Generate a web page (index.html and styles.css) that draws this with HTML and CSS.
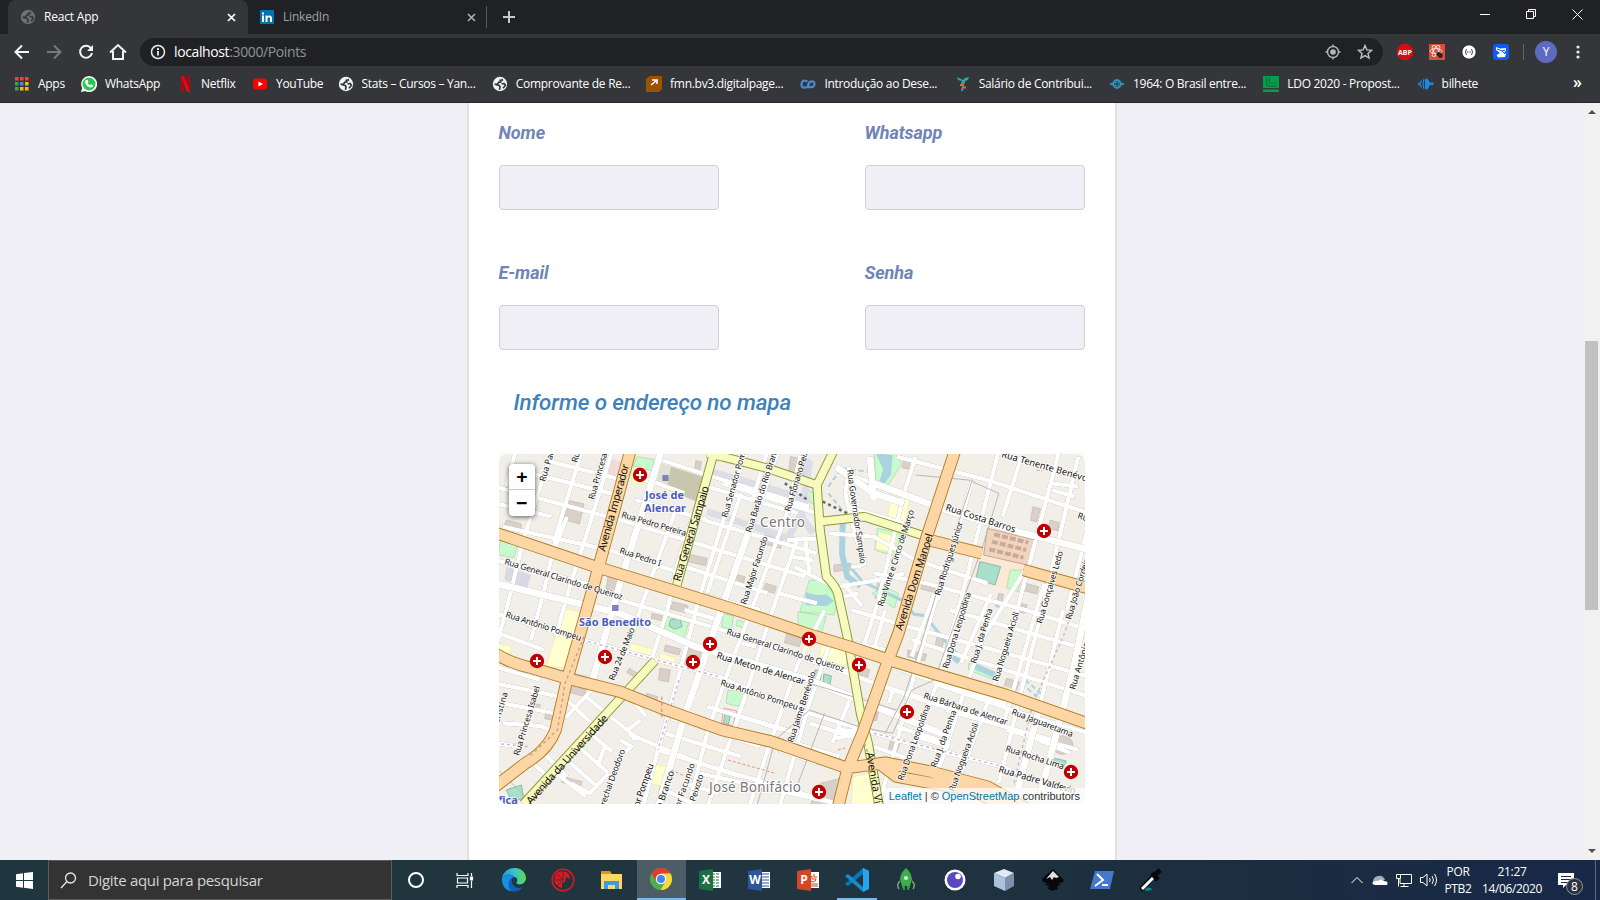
FILE: index.html
```html
<!DOCTYPE html>
<html lang="pt-BR">
<head>
<meta charset="utf-8">
<title>React App</title>
<link rel="stylesheet" href="styles.css">
</head>
<body>
<svg class="defs" width="0" height="0">
  <symbol id="globe" viewBox="0 0 16 16"><circle cx="8" cy="8" r="7.200" fill="currentColor"/><path d="M2.500 8.200L5 8.500l1.800-2.200 2-.4L8 3.500M4 9l3 .2 1 1.600-.5 3M10 2.800l.4 2.200M9.500 8l2.500-.6 1.500 1.800-2.500 3" fill="none" stroke="#35363a" stroke-width="1.700"/></symbol>
  <symbol id="cross" viewBox="-8 -8 16 16"><circle r="7.200" fill="#bf0000"/><path d="M0-4V4M-4 0H4" stroke="#fff" stroke-width="2"/></symbol>
</svg>
<div class="screen">
  <header class="browser">
    <div class="tabs">
      <div class="tab active"><svg class="fav dim" width="16" height="16"><use href="#globe"/></svg><span>React App</span><svg class="x" width="9" height="9" viewBox="0 0 9 9"><path d="M1 1l7 7M8 1L1 8"/></svg></div>
      <div class="tab"><svg class="fav" width="14" height="14" viewBox="0 0 14 14"><path fill="#0073b1" d="M0 0h14v14H0z"/><path fill="#fff" d="M2 5.500h2V12H2zM2 2.500h2v2H2zM5.500 5.500h1.900v1c1-1.700 4.600-1.500 4.600 1.500v4h-2V8.700c0-2-2.500-2-2.500 0V12h-2z"/></svg><span>LinkedIn</span><svg class="x grey" width="9" height="9" viewBox="0 0 9 9"><path d="M1 1l7 7M8 1L1 8"/></svg></div>
      <svg class="plus" width="12" height="12" viewBox="0 0 12 12"><path d="M6 0v12M0 6h12"/></svg>
      <div class="win">
        <svg width="10" height="10" viewBox="0 0 10 10"><path d="M0 5.500h10"/></svg>
        <svg width="10" height="10" viewBox="0 0 10 10"><path d="M.5 2.500h7v7h-7zM2.500 2.500v-2h7v7h-2"/></svg>
        <svg width="11" height="11" viewBox="0 0 11 11"><path d="M.5.5l10 10M10.500.5l-10 10"/></svg>
      </div>
    </div>
    <div class="toolbar">
      <div class="nav">
        <svg width="16" height="16" viewBox="0 0 16 16"><path d="M15 8H2M8 1.500L1.500 8 8 14.500"/></svg>
        <svg class="off" width="16" height="16" viewBox="0 0 16 16"><path d="M1 8h13M8 1.500L14.500 8 8 14.500"/></svg>
        <svg width="16" height="16" viewBox="0 0 16 16"><path d="M13.200 4.500A6 6 0 1 0 14 9"/><path d="M15 1v6H9z" fill="#f1f3f4" stroke="none"/></svg>
        <svg width="18" height="18" viewBox="0 0 18 18"><path d="M1 9.500l8-7.500 8 7.500M4 8v8h10V8"/></svg>
      </div>
      <div class="omni">
        <svg width="16" height="16" viewBox="0 0 16 16" fill="none" stroke="#e8eaed" stroke-width="1.500"><circle cx="8" cy="8" r="6.500"/><path d="M8 7v4.500M8 4v2" stroke-width="1.800"/></svg>
        <span class="url"><b>localhost</b>:3000/Points</span>
        <svg class="target" width="16" height="16" viewBox="0 0 16 16" fill="none" stroke="#b4b8bd" stroke-width="1.400"><circle cx="8" cy="8" r="5.500"/><circle cx="8" cy="8" r="2.800" fill="#b4b8bd" stroke="none"/><path d="M8 .5v2M8 13.500v2M.5 8h2M13.500 8h2"/></svg>
        <svg width="16" height="16" viewBox="0 0 16 16" fill="none" stroke="#bdc1c6" stroke-width="1.400"><path d="M8 1.500l1.900 4.400 4.700.4-3.600 3.100 1.100 4.700L8 11.600l-4.100 2.500L5 9.400 1.400 6.300l4.700-.4z"/></svg>
      </div>
      <div class="exts">
        <svg width="16" height="16" viewBox="0 0 16 16"><path fill="#d40d12" d="M4.700 0h6.600L16 4.700v6.600L11.300 16H4.700L0 11.300V4.700z"/><text x="8" y="10.600" class="abp">ABP</text></svg>
        <svg width="16" height="16" viewBox="0 0 16 16"><path fill="#dd4b39" d="M0 0h16v16H0z"/><g fill="none" stroke="#f3dcd8"><ellipse cx="7" cy="7" rx="6" ry="2.400"/><ellipse cx="7" cy="7" rx="6" ry="2.400" transform="rotate(60 7 7)"/><ellipse cx="7" cy="7" rx="6" ry="2.400" transform="rotate(120 7 7)"/></g><ellipse cx="10.500" cy="11" rx="3.500" ry="2.500" transform="rotate(35 10.500 11)" fill="#33201e"/></svg>
        <svg width="16" height="16" viewBox="0 0 16 16"><circle cx="8" cy="8" r="7.200" fill="#fff" stroke="#222"/><path d="M5.500 5q-2 3 0 6M10.500 5q2 3 0 6" stroke="#444" fill="none"/><path d="M6 8h4" stroke="#444" stroke-dasharray="1 .6"/></svg>
        <svg width="16" height="16" viewBox="0 0 16 16"><rect width="16" height="16" rx="3" fill="#0a5cf5"/><path fill="#fff" d="M3 3l4 1.500L13 4v3l-2 1 2 2-1 3-7 .5L3.500 11 7 9 3 6z"/><path d="M4 5l5 2 3 3M9 7l3-1" stroke="#0a5cf5" fill="none"/></svg>
        <i class="sep"></i><span class="avatar">Y</span>
        <svg width="4" height="16" viewBox="0 0 4 16" fill="#e8eaed"><circle cx="2" cy="3" r="1.600"/><circle cx="2" cy="8" r="1.600"/><circle cx="2" cy="13" r="1.600"/></svg>
      </div>
    </div>
    <div class="bookmarks">
      <a class="w67"><svg width="16" height="16" viewBox="0 0 16 16"><path fill="#f04438" d="M1 1h3.500v3.500H1zM6 1h3.500v3.500H6zM11 1h3.500v3.500H11z"/><path fill="#34a853" d="M1 6h3.500v3.500H1zM1 11h3.500v3.500H1z"/><path fill="#4285f4" d="M6 6h3.500v3.500H6z"/><path fill="#fbbc05" d="M11 6h3.500v3.500H11zM6 11h3.500v3.500H6zM11 11h3.500v3.500H11z"/></svg><span>Apps</span></a>
      <a class="w96"><svg width="16" height="16" viewBox="0 0 16 16"><path fill="#fff" d="M0 16l1.200-4A8 8 0 1 1 4.200 15z"/><circle cx="8" cy="8" r="6.500" fill="#25c94b"/><path fill="#fff" d="M5 4l1.500-.2L7.500 6l-.8 1c.6 1.100 1.300 1.700 2.400 2.200l1-1 2.100 1c0 2-2 2.500-3.500 2C6 10.500 4 8.500 4 6q0-1.300 1-2z"/></svg><span>WhatsApp</span></a>
      <a class="w75"><svg width="16" height="16" viewBox="0 0 16 16"><path fill="#b1060f" d="M4 0h3v16H4zM10 0h3v16h-3z"/><path fill="#e50914" d="M4 0h3l6 16h-3z"/></svg><span>Netflix</span></a>
      <a class="w85"><svg width="16" height="16" viewBox="0 0 16 16"><rect x="1" y="2.500" width="14" height="11" rx="2.500" fill="#f00"/><path fill="#fff" d="M6.500 5.500v5L11 8z"/></svg><span>YouTube</span></a>
      <a><svg width="16" height="16"><use href="#globe"/></svg><span>Stats – Cursos – Yan...</span></a>
      <a><svg width="16" height="16"><use href="#globe"/></svg><span>Comprovante de Re...</span></a>
      <a><svg width="16" height="16" viewBox="0 0 16 16"><path fill="#9b5300" d="M4 0h12v13l-3 3H0V3z"/><path d="M5 9l5-4M6 4h5v4" stroke="#fff" stroke-width="1.500" fill="none"/></svg><span>fmn.bv3.digitalpage...</span></a>
      <a><svg width="16" height="16" viewBox="0 0 16 16"><path d="M7.500 5.500Q2 3 1.500 8t6 3L9.500 6q5-2 5 2t-6 3" fill="none" stroke="#4b88cf" stroke-width="2.300"/></svg><span>Introdução ao Dese...</span></a>
      <a><svg width="16" height="16" viewBox="0 0 16 16"><path fill="#2fa7a5" d="M2 1l4 2 2 1 2-2 4-1-1 3-3 1 0 2-1 1-1 7H6l1-5-1-3 1-2-4-1z"/><path d="M5 9h4M8 11.500h3" stroke="#f56322" stroke-width="2"/></svg><span>Salário de Contribui...</span></a>
      <a><svg width="16" height="16" viewBox="0 0 16 16"><path d="M4 7q4-6 8 0M4 9q4 6 8 0M1 8h4M11 8h4" fill="none" stroke="#2a93c4" stroke-width="2"/><circle cx="8" cy="8" r="2" fill="none" stroke="#2a93c4"/></svg><span>1964: O Brasil entre...</span></a>
      <a><svg width="16" height="16" viewBox="0 0 16 16"><path fill="#00a04a" d="M0 0h16v12H0zM0 13.500h16V16H0z"/><path d="M3.500 1v9H14M6 1v6h8" stroke="#0b6d38" fill="none"/></svg><span>LDO 2020 - Propost...</span></a>
      <a><svg width="16" height="16" viewBox="0 0 16 16"><path fill="#1e88e5" d="M9 2l2 3 1 1.500h3.500v2.500H12L11 11l-2 3-2-2V4z"/><path d="M6 3L5 8l1 5M3.500 4.500L2 8l1.500 3.500M.8 6.500v3" fill="none" stroke="#1e88e5" stroke-width="1.200"/></svg><span>bilhete</span></a>
      <span class="more">»</span>
    </div>
  </header>

  <main class="page">
    <section class="card">
      <div class="grid">
        <label>Nome<input type="text"></label>
        <label>Whatsapp<input type="text"></label>
        <label>E-mail<input type="text"></label>
        <label>Senha<input type="text"></label>
      </div>
      <h2>Informe o endereço no mapa</h2>
      <div class="map">
        <svg width="586" height="350" viewBox="499 454 586 350">
          <g transform="translate(495 450) scale(.3788 .3333)" class="land">
            <path class="bld" d="M190 150l45 12-12 60-45-14zM300 370l25 5-10 50-22-8zM415 490l32 10-3 14-32-10zM510 595l35 10-14 60-35-10zM500 310l60 15-4 22-60-15zM470 455l40 12-5 22-42-12zM620 370l40 10-5 25-38-12zM715 400l28 10-6 20-30-9zM770 550l40 12-6 28-40-12zM820 490l32 10-8 35-30-8zM895 345l45-5v20l-45 5zM1010 400l20 5-10 45-17-5zM1050 180l15-15-5 40-14-2zM1080 30l20 8-5 20-20-5zM1130 395l35 12-6 20-35-10zM1400 400l35 10-4 22-35-10zM1385 460l20 5-7 25-18-5zM1330 430l13 3-10 40-12-4zM1350 685l35 10-8 26-33-9zM1090 600l50 13-6 20-45-12zM945 645l44 14-5 22-44-14zM435 655l28 5-5 36-26-6zM355 655l40 28-7 12-40-28zM200 705l40 14-5 20-40-12zM100 760l20 5-5 18-20-5zM135 780l28 7-5 25-27-6zM400 730l30 10-7 25-28-8zM180 980l50 15-4 17-50-15zM435 1005l10-35 20 6-14 60-18-5zM860 1000l70-20-12 94h-90zM1045 870l25 8-10 30-22-7zM1000 770l15 3-8 40-15-3zM30 210l40 12-4 26-45-12zM530 32l15 4-5 30-12-6zM780 20l50 10-10 50-45-12zM715 240l45 15-6 40-40-12zM1465 210l25 8-4 24-25-7zM1420 170l20 6-10 40-16-5zM1170 550l20 6-12 42-18-5zM60 640l28 9-6 27-26-7zM450 585l40 12-4 18-40-12z"/>
            <circle class="bld" cx="1498" cy="885" r="28"/>
            <path fill="#c8c6af" d="M460 48l105 38-26 72-90-42z"/>
            <path fill="#f1dada" d="M300 25l52 15-14 48-54-14z"/>
            <path fill="#fbe8d5" d="M1275 310l135 35-25 85-125-40z"/>
            <path fill="#e2e1d2" d="M435 40l30 8-12 70-28-10z"/>
            <path fill="#f0d4c0" stroke="#c9a58a" d="M1300 235l125 35-20 75-115-30z"/>
            <path fill="none" stroke="#c9aa97" stroke-width="4" stroke-dasharray="6 2" d="M1318 253l90 25M1312 275l90 25M1305 298l90 25"/>
            <path fill="#c8facc" stroke="#a5cfa9" stroke-width=".6" d="M375 20l45 8-5 35-50-15zM830 390q80 0 75 60l-10 45-90-10zM800 485l75 15-15 55-60-25zM1000 0h50l25 40-40 70-30-20zM1010 235l62 15-15 70-55-20zM450 500l62 18-15 50-50-15zM615 720l45 5-15 45-35-10zM600 490l30 8-6 40-25-8zM640 510l25 8-4 17-25-8zM1030 410l35 20-10 45-60-45zM1250 640l80 30-10 20-70-30zM15 270l45 12-10 42-42-10zM1360 360h35l-14 65-30-12zM820 115l30 20-5 30-25-14z"/>
            <path fill="#ffffd0" stroke="#f2efb0" d="M360 60l40 10-3 35-35-7zM180 475l45 10-30 170-60-5zM360 580l65 20-5 20-65-18zM1045 135l50 15-12 80-48-20zM1013 245l48 15-10 48-46-12zM860 585l70 15-3 50-70-25zM410 940l45 10-12 60-35-10zM945 980l50-10 10 104h-65zM815 560l20 25-6 20-18-5zM1345 710l28 10-6 20-25-8zM0 580l45 10-8 20-37-8zM435 610l42 12-4 20-40-12z"/>
            <path fill="#aae0cb" stroke="#8dbba8" d="M1280 335l55 15-15 55-50-20zM30 1020l40-15 5 40-30 10zM845 660l18 2-4 30-18-3zM868 672l20 6-4 30-18-5zM463 510l25-6 6 26-20 8-15-10zM1478 925l30 8-6 16-30-8zM608 785l15 4-7 35-13-3z"/>
            <path fill="none" stroke="#ef9f9f" d="M604 775l34 8-10 44-30-8z"/>
            <path fill="#aad3df" d="M820 425q30 15 55 8l20 20-20 15-55-2zM1005 10l45 5-5 60-20 30-10-12 10-35z"/>
            <path class="water w5" d="M918 210l-2 100 14 70 35 28"/><path class="water w4" d="M930 340l40 55 60 32 50 27 25 38 30 5 60 85 30 35"/><path class="water w5" d="M1190 600l35 35M1260 645l60 30"/>
            <path class="water dash" d="M880 110l35-55 70 10M880 130l40 55M1390 700l50 50M1400 690l50 50"/>
            <path fill="#d9d9e6" d="M30 350l65 25-10 40-60-25zM210 668l45 12-9 20-40-5z"/>
            <path class="mall" d="M555 60L830 150M560 185L790 270M730 30l-20 80M830 30l-20 170 30 50M780 140l30 50-40 80"/>
          </g>
          <g transform="translate(495 450) scale(.3788 .3333)">
            <g class="minor">
              <path d="M55 0L30 110M150 0L75 270 30 480 0 600M230 0L165 240 130 420 95 570M310 0L240 260 200 400 160 560M190 200L150 320M530 170L480 350 455 480 410 640M480 170L395 440 360 560M665 0L600 220 540 440 480 700 430 900 390 1074M810 0L770 190 690 440 620 650 560 850 510 1074M720 0L680 150M650 130L560 430M800 260L730 490 660 740 560 1074M870 480L800 640 720 900 670 1074M890 560L830 760 750 1074M940 740L890 880M935 50L925 130 950 250 975 340 960 350 940 350M1110 20L1080 130 1010 460 970 600M1190 350L1115 640 1060 880 1010 1074M1330 0L1290 180 1230 450 1170 690 1070 990M1390 20L1340 200M1260 90L1170 450M1400 360L1290 560 1240 720 1160 1000M1490 0L1430 260 1350 600 1300 760 1220 1000M1540 20L1440 500 1390 720 1330 1000M1450 400L1340 830M1568 220L1510 480M1500 480L1440 760 1380 1020M1030 480L1000 600M1160 430L1100 620M1310 430L1230 640"/>
              <path d="M60 60L340 140M0 110L330 210 560 290 820 380M20 230L300 300 480 365M0 160L150 200M380 80L500 130M370 150L560 210M440 30L560 75 830 170M560 110L800 190M550 210L850 310M490 420L700 480M500 350L720 430M500 480L590 510M130 30L320 85M0 330L240 400 330 450 600 540 930 670 1100 740 1350 830 1520 910M0 490L230 570 590 680 800 780 1060 870 1340 950 1500 1030M600 100L850 190M1060 20L1300 90 1568 190M900 60L1000 100M930 170L1080 220M880 250L1000 260 1110 330 1300 400M1000 370L1140 400 1400 480 1568 540M940 480L1090 530 1350 610 1568 680M1100 570L1568 740M1200 480L1568 600M1160 700L1390 790 1568 850M1050 650L1150 690 1350 760M1360 20L1568 90M1470 100L1540 110M1470 120L1530 140M1000 700L1320 810M950 580L1030 600M820 630L950 670M770 270L870 265M840 330L780 320M790 350L910 420M910 410L1010 390 1080 370M920 440L960 430M0 700L170 740M0 650L120 690M20 760L160 790M430 100L390 90M750 430L850 460M650 580L690 590M820 270L830 370M860 260L865 340M920 400L970 470M10 550L130 600"/>
              <path d="M20 820l100 8 40 20M0 880l70 10M180 740L255 820M280 690L235 745 185 805M240 740L370 860 540 940 720 1000 900 1060M355 740L400 800M465 805L700 880M450 850L650 920M430 900L650 980M440 790L700 890M250 850l60 55M210 880l90 90M180 920l90 90M150 960l90 80M90 930l60 60M120 900l70 80M300 970l-50 60-50-30M320 930l40-40-30-20M370 870l-20-30 35-30M290 890l-20 60M540 970L900 1060M560 770L760 840M450 1020l70 40M500 1000l90 30M760 870L910 920M830 820L970 870M1000 890L1100 930M1060 830L1200 880M1100 980L1250 1020M1110 860l90 30M1190 780L1470 870M1350 840L1540 900M1150 1000l20-60M750 900L850 940M910 840l70 5-80 20M1040 760l10-40M650 800L800 850"/>
            </g>
            <g class="minor wide">
              <path d="M440 0L330 400 290 560 255 700M745 0L600 470 500 800 430 1074M0 400L330 490 530 590 830 690 960 750 1200 860M1000 100L1190 180 1380 245 1568 300M1568 430L1530 640 1480 860 1440 1030M900 50L1000 130 1080 160M1440 760L1380 1020M990 20l10 130"/>
            </g>
            <path class="foot" d="M230 570L590 680M485 690L430 900M0 880L90 890M1000 850L1340 950M1540 430L1500 560 1420 760 1370 1000"/>
            <path class="reddash" d="M615 930L740 970M465 960l60 30M1430 60l15 3M905 900l25-8"/>
            <path class="rail" d="M1110 75L1250 90 1330 130 1290 280 1160 690 1100 720 1050 850 960 830 830 780 740 870 690 1074M1260 90L1200 300 1120 600 1080 740 1030 850M830 700L1060 780M0 950L80 1040M870 790L800 1000"/>
            <path class="pale" d="M422 632L75 1062M580 0L480 405M560 10L600 20 720 55 850 105M895 0L850 105 858 240 875 380Q900 410 905 430L930 560 965 790 985 880 1015 1074M855 215L975 200 1125 255"/>
            <path class="pale fill" d="M422 632L75 1062M580 0L480 405M560 10L600 20 720 55 850 105M895 0L850 105 858 240 875 380Q900 410 905 430L930 560 965 790 985 880 1015 1074M855 215L975 200 1125 255"/>
            <path class="hwy" d="M0 248L265 350 480 425 650 485 820 550 935 590 1040 630 1170 675 1350 735 1568 822M358 0L275 345 262 400 190 690 160 840Q140 900 80 940L0 1010M0 610Q40 640 100 655L190 685 330 725 440 775 600 840 730 875 920 950M925 955L1030 938 1150 965 1300 1010 1400 1074M1020 945L1060 980 1180 1005 1260 1020 1350 1074M1215 0L1140 260 1065 550 1035 640 970 850 930 960 905 1074M1145 270L1285 310M1395 360L1568 415"/>
            <path class="hwy fill" d="M0 248L265 350 480 425 650 485 820 550 935 590 1040 630 1170 675 1350 735 1568 822M358 0L275 345 262 400 190 690 160 840Q140 900 80 940L0 1010M0 610Q40 640 100 655L190 685 330 725 440 775 600 840 730 875 920 950M925 955L1030 938 1150 965 1300 1010 1400 1074M1020 945L1060 980 1180 1005 1260 1020 1350 1074M1215 0L1140 260 1065 550 1035 640 970 850 930 960 905 1074M1145 270L1285 310M1395 360L1568 415"/>
            <path class="foot dark" d="M235 560L185 700 165 840 90 920M440 740v60M975 880l20 60"/>
            <path fill="#7b82bd" d="M442 75h16v18h-16zM309 465h17v18h-17z"/>
            <path fill="none" stroke="#666" stroke-width="2.500" stroke-dasharray="3 3" d="M765 100l60 50M865 155l65 35"/>
          </g>
          <g class="lb">
            <g class="big">
              <text transform="translate(605 552) rotate(-74.500)" textLength="90">Avenida Imperador</text>
              <text transform="translate(680 582) rotate(-73)" textLength="99">Rua General Sampaio</text>
              <text transform="translate(902 631) rotate(-72)" textLength="101">Avenida Dom Manoel</text>
              <text transform="translate(531 805) rotate(-48)" textLength="116">Avenida da Universidade</text>
              <text transform="translate(866 753) rotate(80)">Avenida Visconde</text>
            </g>
            <text transform="translate(621 517) rotate(16.500)" textLength="67">Rua Pedro Pereira</text>
            <text transform="translate(619 553) rotate(18)" textLength="43">Rua Pedro I</text>
            <text transform="translate(504 564) rotate(17)" textLength="123">Rua General Clarindo de Queiroz</text>
            <text transform="translate(505 617) rotate(17.700)" textLength="79">Rua Antônio Pompeu</text>
            <text transform="translate(545 482) rotate(-73)">Rua Padre Mororó</text>
            <text transform="translate(577 463) rotate(-73)">Rua</text>
            <text transform="translate(594 500) rotate(-74)" textLength="72">Rua Princesa Isabel</text>
            <text transform="translate(727 518) rotate(-74)" textLength="82">Rua Senador Pompeu</text>
            <text transform="translate(751 533) rotate(-72)" textLength="92">Rua Barão do Rio Branco</text>
            <text transform="translate(746 605) rotate(-72)" textLength="71">Rua Major Facundo</text>
            <text transform="translate(790 512) rotate(-73)" textLength="75">Rua Floriano Peixoto</text>
            <text transform="translate(847 470) rotate(82)" textLength="95">Rua Governador Sampaio</text>
            <text transform="translate(883 607) rotate(-72)" textLength="101">Rua Vinte e Cinco de Março</text>
            <text transform="translate(940 596) rotate(-72.500)" textLength="77">Rua Rodrigues Júnior</text>
            <text class="mid" transform="translate(945 510) rotate(18)" textLength="73">Rua Costa Barros</text>
            <text class="mid" transform="translate(1001 457) rotate(16)" textLength="97">Rua Tenente Benévolo</text>
            <text transform="translate(1042 624) rotate(-73.600)" textLength="75">Rua Gonçalves Ledo</text>
            <text transform="translate(1071 620) rotate(-73)" textLength="67">Rua João Cordeiro</text>
            <text transform="translate(948 669) rotate(-73)" textLength="79">Rua Dona Leopoldina</text>
            <text transform="translate(976 664) rotate(-73)" textLength="57">Rua J. da Penha</text>
            <text transform="translate(998 682) rotate(-73)" textLength="72">Rua Nogueira Acioli</text>
            <text transform="translate(614 681) rotate(-68)" textLength="56">Rua 24 de Maio</text>
            <text transform="translate(726 634) rotate(18)" textLength="123">Rua General Clarindo de Queiroz</text>
            <text class="mid" transform="translate(716 658) rotate(17)" textLength="92">Rua Meton de Alencar</text>
            <text transform="translate(720 685) rotate(18)" textLength="81">Rua Antônio Pompeu</text>
            <text transform="translate(519 756) rotate(-73)" textLength="72">Rua Princesa Isabel</text>
            <text transform="translate(493 742) rotate(-73)" textLength="51">Rua Cristina</text>
            <text transform="translate(601 817) rotate(-70)" textLength="71">Marechal Deodoro</text>
            <text class="mid" transform="translate(631 831) rotate(-71)" textLength="70">Senador Pompeu</text>
            <text class="mid" transform="translate(645 857) rotate(-71)" textLength="90">Barão do Rio Branco</text>
            <text transform="translate(675 822) rotate(-71)" textLength="61">Major Facundo</text>
            <text transform="translate(695 802) rotate(-72)" textLength="28">Peixoto</text>
            <text transform="translate(793 743) rotate(-72)" textLength="74">Rua Jaime Benévolo</text>
            <text transform="translate(923 698) rotate(18)" textLength="88">Rua Bárbara de Alencar</text>
            <text transform="translate(1011 714) rotate(21)" textLength="65">Rua Jaguaretama</text>
            <text transform="translate(1005 751) rotate(17.600)" textLength="61">Rua Rocha Lima</text>
            <text class="mid" transform="translate(998 772) rotate(16)" textLength="80">Rua Padre Valdevin</text>
            <text transform="translate(903 781) rotate(-70)" textLength="80">Rua Dona Leopoldina</text>
            <text transform="translate(936 768) rotate(-70)" textLength="60">Rua J. da Penha</text>
            <text transform="translate(954 792) rotate(-70)" textLength="72">Rua Nogueira Acioli</text>
            <text transform="translate(1075 690) rotate(-73)">Rua Antônio</text>
            <text transform="translate(1077 518) rotate(18)">Rua</text>
            <text class="place" x="760" y="527" textLength="45">Centro</text>
            <text class="place" x="709" y="792" textLength="92">José Bonifácio</text>
            <g class="stn"><text x="645" y="499" textLength="39">José de</text><text x="644" y="512" textLength="42">Alencar</text><text x="579" y="626" textLength="72">São Benedito</text><text x="498" y="804">fica</text></g>
          </g>
          <g><use href="#cross" x="632" y="467" width="16" height="16"/><use href="#cross" x="1036" y="523" width="16" height="16"/><use href="#cross" x="529" y="653" width="16" height="16"/><use href="#cross" x="597" y="649" width="16" height="16"/><use href="#cross" x="702" y="636" width="16" height="16"/><use href="#cross" x="685" y="654" width="16" height="16"/><use href="#cross" x="801" y="631" width="16" height="16"/><use href="#cross" x="851" y="657" width="16" height="16"/><use href="#cross" x="899" y="704" width="16" height="16"/><use href="#cross" x="1063" y="764" width="16" height="16"/><use href="#cross" x="811" y="784" width="16" height="16"/></g>
        </svg>
        <div class="zoomer"><a>+</a><a>−</a></div>
        <div class="attr"><a>Leaflet</a> | © <a>OpenStreetMap</a> contributors</div>
      </div>
    </section>
    <div class="scroll"><i class="up"></i><i class="thumb"></i><i class="down"></i></div>
  </main>

  <footer class="taskbar">
    <div class="start"><svg width="17" height="17" viewBox="0 0 17 17" fill="#fff"><path d="M0 2.300L7 1.300V8H0zM8 1.100L17 0v8H8zM0 9h7v6.700l-7-1zM8 9h9v8l-9-1.200z"/></svg></div>
    <div class="search"><svg width="17" height="17" viewBox="0 0 17 17" fill="none" stroke="#e8e8e8" stroke-width="1.300"><circle cx="10.500" cy="6" r="5"/><path d="M7 9.500L1 16"/></svg><span>Digite aqui para pesquisar</span></div>
    <div class="apps">
      <i><svg viewBox="0 0 24 24"><circle cx="12" cy="12" r="7" fill="none" stroke="#fff" stroke-width="2"/></svg></i>
      <i><svg viewBox="0 0 24 24" fill="none" stroke="#fff" stroke-width="1.200"><path d="M4 5v2.500h11V5M4 20v-2.500h11V20M4.500 10h10v5h-10zM18.500 5v3M18.500 13v7"/><path d="M17.500 9h2v3h-2z" fill="#fff"/></svg></i>
      <i><svg viewBox="0 0 24 24"><defs><linearGradient id="eg"><stop stop-color="#2598dc"/><stop offset=".5" stop-color="#35c3cf"/><stop offset="1" stop-color="#62d94c"/></linearGradient></defs><path fill="url(#eg)" d="M0 11C1-3 23-4 24 10c0 6-7 8-10 5 2-2 2-6-2-6-5-1-8 0-12 2z"/><path fill="#0c62b8" d="M0 11c3-6 11-5 12-2-4 2-3 11 6 11l3-1C14 28-1 23 0 11z"/><path fill="#1990df" d="M0 11c3-5 9-5 12-2-6 1-7 9-3 14-6-1-9-6-9-12z"/></svg></i>
      <i><svg viewBox="0 0 24 24"><circle cx="12" cy="12" r="10.800" fill="none" stroke="#d71920" stroke-width="1.500"/><path fill="#d71920" d="M5 5q8-4 13 1l1 5-4-2-1 5-3 1v5q-7-2-8-8z"/><path d="M3 12h9M6 6l6 6M6 18l6-6M12 3v9" stroke="#21353f" stroke-width=".7"/></svg></i>
      <i><svg viewBox="0 0 24 24"><path fill="#d79a14" d="M1 3h9l2 3H1z"/><path fill="#ffd668" d="M1 6h21v15H1z"/><path fill="#3d9be0" d="M4 21v-8h15v8h-4v-4H8v4z"/></svg></i>
      <i class="cur"><svg viewBox="0 0 24 24"><circle cx="12" cy="12" r="11" fill="#4caf50"/><path fill="#e33b2e" d="M2.500 6.500A11 11 0 0 1 21.500 6.500H12L7.500 14.500z"/><path fill="#fdd835" d="M21.500 6.500A11 11 0 0 1 11.500 23l5-8.500-4-8z"/><circle cx="12" cy="12" r="5.200" fill="#fff"/><circle cx="12" cy="12" r="4" fill="#4285f4"/></svg></i>
      <i><svg viewBox="0 0 24 24"><path fill="#fff" d="M13 4h10v16H13z"/><path stroke="#217346" stroke-dasharray="3 1" d="M14 6h8M14 9h8M14 12h8M14 15h8M14 18h8"/><path fill="#1d7044" d="M1 3l14-2v22L1 21z"/><text x="8" y="16" class="ofc">X</text></svg></i>
      <i><svg viewBox="0 0 24 24"><path fill="#fff" d="M13 4h10v16H13z"/><path stroke="#2b579a" d="M14 6h8M14 9h8M14 12h8M14 15h8M14 18h8"/><path fill="#2b579a" d="M1 3l14-2v22L1 21z"/><text x="8" y="16" class="ofc">W</text></svg></i>
      <i><svg viewBox="0 0 24 24"><path fill="#fff" d="M13 4h10v16H13z"/><path stroke="#d24726" fill="none" d="M16 8a3 3 0 1 0 4 3h-4zM18 6v3h3M15 16h7M15 18h7"/><path fill="#d24726" d="M1 3l14-2v22L1 21z"/><text x="8" y="16" class="ofc">P</text></svg></i>
      <i class="run"><svg viewBox="0 0 24 24"><path fill="#0878bd" d="M18 0l6 3-6 3L3 18l-3-2z"/><path fill="#168ed0" d="M0 8l3-2 15 13v5z"/><path fill="#27a6ef" d="M18 0l6 3v18l-6 3z"/></svg></i>
      <i><svg viewBox="0 0 24 24"><path fill="#3fae49" d="M12 0q5 4 6 11l-2 7H8l-2-7q1-7 6-11z"/><circle cx="12" cy="10" r="2" fill="#d9f5db"/><path d="M6 13q-4 4-1 8M18 13q4 4 1 8" fill="none" stroke="#73a678" stroke-width="1.500"/><path d="M8 19h2v3M16 19h-2v3" fill="none" stroke="#3fae49" stroke-width="1.500"/></svg></i>
      <i><svg viewBox="0 0 24 24"><circle cx="12" cy="12" r="10.500" fill="#fff"/><circle cx="12" cy="12" r="8" fill="#5849be"/><circle cx="15" cy="8.500" r="2.800" fill="#fff"/></svg></i>
      <i><svg viewBox="0 0 24 24"><path fill="#dfeaf5" d="M12 1l10 4-9 5L2 5z"/><path fill="#acc3dc" d="M2 5l11 5v13L2 18z"/><path fill="#7c91aa" d="M13 10l9-5v13l-9 5z"/></svg></i>
      <i><svg viewBox="0 0 24 24"><path fill="#080808" d="M12 1l11 11q0 3-6 3l3 2-4 1 1 3-6 2-5-3 3-2-5-1 2-2q-5-1-5-4z"/><path fill="#dce1e4" d="M12 3l6 6-3 1-2-1-2 3-2-3-4 2z"/></svg></i>
      <i><svg viewBox="0 0 24 24"><path fill="#4478cf" d="M5 3h19l-4 18H0z"/><path d="M7 6l6 6-8 6M12 17h6" stroke="#fff" stroke-width="2" fill="none"/></svg></i>
      <i><svg viewBox="0 0 24 24"><path fill="#008e86" d="M0 21q5-4 14 0l-5 2z"/><path d="M2 22L15 8" stroke="#080808" stroke-width="5"/><path d="M3 21L15 9" stroke="#fff" stroke-width="3"/><path d="M13 5l6 7M16 7l5-5" stroke="#080808" stroke-width="5"/></svg></i>
    </div>
    <div class="tray">
      <svg width="12" height="8" viewBox="0 0 12 8"><path d="M.5 7L6 1.500 11.500 7"/></svg>
      <svg width="16" height="16" viewBox="0 0 16 16"><path stroke="none" fill="#a6adb7" d="M1 10q0-5 5-6 5-1 7 4z"/><path stroke="none" fill="#fff" d="M3 13q-4-1-2-3 3-2 5-1 3-3 6 0 5 0 3 4z"/></svg>
      <svg width="16" height="16" viewBox="0 0 16 16"><path d="M4 2.500h11.500v9H4V7M8 11.500v3M4.500 14.500h8M.5 2.500h4v4h-4zM2.500 7v7.500"/></svg>
      <svg width="17" height="16" viewBox="0 0 17 16"><path d="M.5 5.500h2.500l4-3.500v12L3 10.500H.5zM9.500 6q1.500 2 0 4M12 4q3 4 0 8M14.500 2q4 6 0 12"/></svg>
      <div class="two lang"><span>POR</span><span>PTB2</span></div>
      <div class="two clock"><span>21:27</span><span>14/06/2020</span></div>
      <div class="note"><svg width="17" height="17" viewBox="0 0 17 17"><path fill="#fff" stroke="none" d="M0 1h16v12H8l-3 3v-3H0z"/><path stroke="#1a2a42" d="M3 4.500h10M3 7.500h10M3 10.500h7"/></svg><b>8</b></div>
    </div>
  </footer>
</div>
</body>
</html>
```

FILE: styles.css
```css
* { box-sizing: border-box; }
body { margin: 0; overflow: hidden; font-family: "Open Sans", "Noto Sans", sans-serif; }
.defs { position: absolute; }
.screen { width: 1600px; height: 900px; display: flex; flex-direction: column; background: #f0eff5; }
svg { display: block; flex: none; }
i { font-style: normal; }

.browser { height: 103px; background: #35363a; border-bottom: 1px solid #252629; color: #fff; font-size: 12px; flex: none; }
.tabs { height: 34px; background: #202124; display: flex; align-items: center; padding-left: 8px; }
.tab { width: 240px; height: 34px; padding: 0 12px; display: flex; align-items: center; color: #9fa3a8; }
.tab span { flex: 1; margin-left: 8px; padding-bottom: 1px; letter-spacing: -.2px; }
.tab.active { background: #35363a; color: #fff; border-radius: 8px 8px 0 0; }
.tab + .tab { width: 239px; border-right: 1px solid transparent; border-image: linear-gradient(transparent 20%, #55575b 20%, #55575b 80%, transparent 80%) 1; }
.tab:nth-child(2) span { margin-left: 9px; }
.dim { color: #6e7175; }
.x, .plus { stroke: #fff; stroke-width: 1.7; fill: none; }
.x.grey { stroke: #aaa; margin-right: -2px; }
.plus { margin-left: 16px; stroke: #c7c9cc; stroke-width: 2; }
.win { margin-left: auto; display: flex; gap: 36px; padding: 0 17px 5px 0; fill: none; stroke: #fff; }
.toolbar { height: 36px; display: flex; align-items: center; padding: 0 19px 0 14px; }
.nav { width: 126px; display: flex; gap: 16px; align-items: center; fill: none; stroke: #f1f3f4; stroke-width: 2; }
.nav svg:last-child { margin-left: -1px; }
.nav .off { stroke: #77797d; }
.omni { width: 1243px; height: 28px; border-radius: 14px; background: #202124; display: flex; align-items: center; padding: 0 10px; }
.url { margin-left: 8px; font-size: 14px; letter-spacing: -.38px; color: #8f949a; line-height: 20px; }
.url b { font-weight: 400; color: #fff; }
.target { margin: 0 16px 0 auto; }
.exts { display: flex; align-items: center; gap: 16px; margin-left: 14px; }
.abp { font: bold 7px "Open Sans", sans-serif; fill: #fff; text-anchor: middle; }
.sep { width: 1px; height: 16px; background: #606266; margin: 0 -5px 0 -2px; }
.avatar { width: 22px; height: 22px; border-radius: 50%; background: #5c6bc0; text-align: center; line-height: 22px; margin-right: 3px; }
.bookmarks { height: 28px; display: flex; align-items: center; padding-left: 14px; }
.bookmarks a { width: 154.300px; display: flex; align-items: center; gap: 8px; white-space: nowrap; letter-spacing: -.29px; flex: none; }
.bookmarks a span { padding-bottom: 2px; }
.bookmarks a.w67 { width: 67px; }
.bookmarks a.w96 { width: 96px; }
.bookmarks a.w75 { width: 75px; }
.bookmarks a.w85 { width: 85.500px; }
.bookmarks a svg { color: #f1f3f4; }
.bookmarks a:last-of-type { width: 80px; }
.more { margin-left: auto; margin-right: 18px; font-size: 16px; font-weight: 600; line-height: 20px; padding-bottom: 4px; }

.page { flex: 1; min-height: 0; display: flex; justify-content: flex-end; }
.card { width: 650px; background: #fff; border: solid #e1e1e3; border-width: 0 2px; padding: 18px 30px 0; font-family: Roboto, sans-serif; overflow: hidden; }
.grid { display: grid; grid-template-columns: 220px 220px; justify-content: space-between; row-gap: 51px; }
label { display: flex; flex-direction: column; height: 89px; justify-content: space-between; font: italic 700 18px/24px Roboto, sans-serif; letter-spacing: -.05px; text-indent: -.5px; color: #7084b5; }
input { width: 220px; height: 45px; margin: 0; border: 1px solid #cfcfd2; border-radius: 4px; background: #f0eff5; }
h2 { margin: 37px 0 0 14.500px; font: italic 500 22.400px/30px Roboto, sans-serif; letter-spacing: -.1px; color: #3f81b9; white-space: nowrap; }
.map { position: relative; width: 586px; height: 350px; margin-top: 37px; border-radius: 8px; overflow: hidden; background: #f2efe9; }
.map path { vector-effect: non-scaling-stroke; }
.bld { fill: #d9d0c9; stroke: #c5b9af; stroke-width: .7; vector-effect: non-scaling-stroke; }
.water { fill: none; stroke: #aad3df; }
.w5 { stroke-width: 6; }
.w4 { stroke-width: 3; }
.dash { stroke-width: 2; stroke-dasharray: 5 3; }
.mall { fill: none; stroke: #dddde8; stroke-width: 7; }
.minor { fill: none; stroke: #fff; stroke-width: 4.400; filter: drop-shadow(0 0 .6px #8c8c8c); }
.minor.wide { stroke-width: 7; }
.foot { fill: none; stroke: #cdb9cf; stroke-width: 1.500; stroke-dasharray: 3 3; }
.foot.dark { stroke: #c9a38b; }
.reddash { fill: none; stroke: #f38b82; stroke-width: 1; stroke-dasharray: 3 2; }
.rail { fill: none; stroke: #b8b8b8; stroke-width: 1; }
.pale { fill: none; stroke: #8d9632; stroke-width: 9.500; stroke-linejoin: round; }
.pale.fill { stroke: #f7fabf; stroke-width: 7.600; }
.hwy { fill: none; stroke: #b07c24; stroke-width: 12.400; stroke-linejoin: round; }
.hwy.fill { stroke: #fcd6a4; stroke-width: 10.600; }
.lb { font: 8.500px "Noto Sans", sans-serif; fill: #111; stroke: rgba(255, 255, 255, .8); stroke-width: 1.700px; paint-order: stroke; }
.lb .mid { font-size: 9.300px; }
.lb .big { font-size: 10.600px; stroke: none; }
.lb .place { font-size: 13.500px; fill: #777; stroke: #fff; stroke-width: 2px; }
.lb .stn { font-size: 11px; font-weight: 700; fill: #4d5db8; }
.zoomer { position: absolute; left: 10px; top: 10px; width: 26px; border-radius: 4px; background: #fff; box-shadow: 0 1px 5px rgba(0, 0, 0, .65); font: bold 18px/26px "DejaVu Sans Mono", monospace; text-align: center; }
.zoomer a { display: block; height: 26px; }
.zoomer a:first-child { border-bottom: 1px solid #ccc; }
.attr { position: absolute; right: 0; bottom: 0; padding: 0 5px; background: rgba(255, 255, 255, .7); font: 11px/16.500px "Liberation Sans", Arial, sans-serif; color: #333; white-space: nowrap; }
.attr a { color: #0078a8; }
.scroll { width: 17px; margin-left: 466px; background: #f1f1f1; display: flex; flex-direction: column; align-items: center; }
.up { border: 4px solid transparent; border-top: 0; border-bottom-color: #505050; margin-top: 7px; }
.thumb { width: 13px; height: 269px; margin-top: 227px; background: #c1c1c1; }
.down { border: 4px solid transparent; border-bottom: 0; border-top-color: #505050; margin: auto 0 7px; }

.taskbar { height: 40px; flex: none; display: flex; background: linear-gradient(90deg, #20363e, #20353f 50%, #1c2e3f 75%, #182848); color: #fff; }
.start { width: 48px; display: flex; align-items: center; justify-content: center; }
.search { width: 344px; background: #333; border: 1px solid #5d5d5d; display: flex; align-items: center; padding-left: 11px; color: #d5d5d5; font-size: 15px; }
.search span { margin-left: 11px; letter-spacing: -.33px; }
.apps { display: flex; margin-left: -.5px; }
.apps i { width: 49px; display: flex; align-items: center; justify-content: center; }
.apps svg { width: 24px; height: 24px; }
.cur { background: #4d5d65; border-bottom: 2px solid #76b9ed; }
.run { background: linear-gradient(#76b9ed, #76b9ed) bottom / 40px 2px no-repeat; }
.ofc { font: bold 12px "Open Sans", sans-serif; fill: #fff; text-anchor: middle; }
.tray { margin-left: auto; margin-right: 4px; padding-right: 20px; border-right: 1px solid #5d687b; display: flex; align-items: center; fill: none; stroke: #fff; font-size: 12px; }
.tray > svg { margin-right: 8px; }
.tray > svg:first-child { margin-right: 9px; }
.two { display: flex; flex-direction: column; align-items: center; line-height: 17px; letter-spacing: -.35px; }
.lang { width: 26px; }
.clock { width: 62px; margin: 0 10px 0 10px; }
.note { position: relative; margin-left: 5px; width: 17px; }
.note b { position: absolute; left: 8px; top: 6px; width: 17px; height: 17px; border: 1px solid #8d939b; border-radius: 50%; background: #2c333d; font: 12px/15px "Open Sans", sans-serif; text-align: center; }
```
